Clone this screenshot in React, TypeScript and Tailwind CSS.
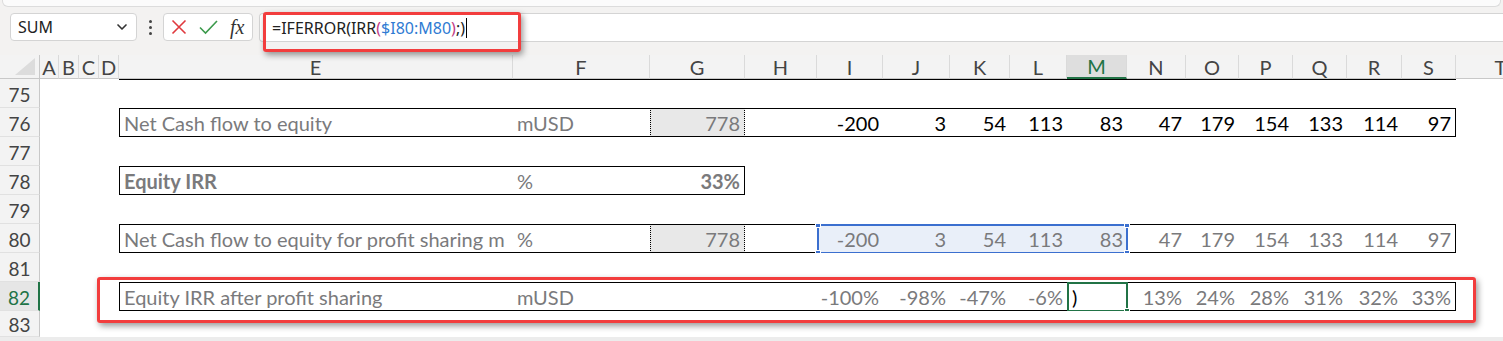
import { ChevronDown } from 'lucide-react'

type CellDef = {
  t?: string
  right?: boolean
  bold?: boolean
  black?: boolean
  shaded?: boolean
}

type RowDef = {
  n: number
  box?: 'full' | 'short' | 'top'
  cells?: Record<string, CellDef>
  active?: boolean
}

const LETTERS = ['A', 'B', 'C', 'D', 'E', 'F', 'G', 'H', 'I', 'J', 'K', 'L', 'M', 'N', 'O', 'P', 'Q', 'R', 'S', 'T']

const GRID =
  'grid grid-cols-[40px_19px_20px_20px_20px_394px_137px_95px_72px_66px_67px_60px_57px_60px_59px_53px_54px_54px_55px_54px_90px]'

const FONT = { fontFamily: 'Lato, "Open Sans", sans-serif' }

function nums(vals: string[], black = false): Record<string, CellDef> {
  const out: Record<string, CellDef> = {}
  const cols = ['I', 'J', 'K', 'L', 'M', 'N', 'O', 'P', 'Q', 'R', 'S']
  vals.forEach((v, i) => {
    if (v !== '') out[cols[i]] = { t: v, right: true, black }
  })
  return out
}

const ROWS: RowDef[] = [
  { n: 75, box: 'top' },
  {
    n: 76,
    box: 'full',
    cells: {
      E: { t: 'Net Cash flow to equity' },
      F: { t: 'mUSD' },
      G: { t: '778', right: true, shaded: true },
      ...nums(['-200', '3', '54', '113', '83', '47', '179', '154', '133', '114', '97'], true),
    },
  },
  { n: 77 },
  {
    n: 78,
    box: 'short',
    cells: {
      E: { t: 'Equity IRR', bold: true },
      F: { t: '%' },
      G: { t: '33%', right: true, bold: true },
    },
  },
  { n: 79 },
  {
    n: 80,
    box: 'full',
    cells: {
      E: { t: 'Net Cash flow to equity for profit sharing m' },
      F: { t: '%' },
      G: { t: '778', right: true, shaded: true },
      ...nums(['-200', '3', '54', '113', '83', '47', '179', '154', '133', '114', '97']),
    },
  },
  { n: 81 },
  {
    n: 82,
    box: 'full',
    active: true,
    cells: {
      E: { t: 'Equity IRR after profit sharing' },
      F: { t: 'mUSD' },
      ...nums(['-100%', '-98%', '-47%', '-6%', '', '13%', '24%', '28%', '31%', '32%', '33%']),
    },
  },
  { n: 83 },
]

function Handle({ pos, color }: { pos: string; color: string }) {
  return <span className={`absolute h-[6px] w-[6px] border border-white ${pos} ${color}`} />
}

function SheetRow({ row, last }: { row: RowDef; last?: boolean }) {
  const h = last ? 'h-[26px] grid-rows-[26px]' : 'h-[29px] grid-rows-[29px]'
  return (
    <div className={`${GRID} ${h} overflow-hidden`}>
      <div
        className={[
          'flex items-center justify-center overflow-hidden border-b border-b-[#e1e1e1] pt-[3px] text-[19px] leading-[24px]',
          row.active
            ? 'border-r-2 border-r-[#217346] bg-[#e6e6e6] text-[#217346]'
            : 'border-r border-r-[#c8c8c8] bg-[#f3f3f3] text-[#444]',
        ].join(' ')}
      >
        {row.n}
      </div>
      {LETTERS.map((L, i) => {
        const c = row.cells?.[L]
        const inFull = row.box === 'full' && i >= 4 && i <= 18
        const inShort = row.box === 'short' && i >= 4 && i <= 6
        const boxed = inFull || inShort
        const first = boxed && i === 4
        const lastCell = (inFull && i === 18) || (inShort && i === 6)
        const selected = row.n === 80 && i >= 8 && i <= 12
        const bg = c?.shaded ? 'bg-[#e8e8e8]' : selected ? 'bg-[#e9eff9]' : 'bg-white'
        const cls = [
          'relative min-h-0',
          bg,
          boxed ? 'border-y border-black' : '',
          row.box === 'top' && i >= 4 && i <= 18 ? 'border-t border-black' : '',
          first ? 'border-l' : '',
          lastCell ? 'border-r' : '',
          c?.shaded ? 'border-x [border-left-style:dotted] [border-right-style:dotted]' : '',
        ].join(' ')
        return (
          <div key={L} className={cls}>
            {c?.t && (
              <div
                className={[
                  'flex h-full items-end overflow-hidden whitespace-nowrap px-[4px] pb-[1px] text-[20px] leading-[24px]',
                  c.right ? 'justify-end' : '',
                  c.bold ? 'font-bold' : '',
                  c.black ? 'text-black' : 'text-[#7a7a7c]',
                ].join(' ')}
              >
                {c.t}
              </div>
            )}
            {row.n === 80 && L === 'I' && (
              <div className="pointer-events-none absolute -top-px left-0 z-10 h-[30px] w-[311px] border-2 border-[#3b6fcf]">
                <Handle pos="-left-[4px] -top-[4px]" color="bg-[#3b6fcf]" />
                <Handle pos="-right-[4px] -top-[4px]" color="bg-[#3b6fcf]" />
                <Handle pos="-left-[4px] -bottom-[4px]" color="bg-[#3b6fcf]" />
                <Handle pos="-right-[4px] -bottom-[4px]" color="bg-[#3b6fcf]" />
              </div>
            )}
            {row.active && L === 'M' && (
              <div className="absolute -top-px left-0 z-10 h-[30px] w-[61px] border-2 border-[#217346]">
                <div className="flex h-full items-end pb-[1px] pl-[3px] text-[20px] leading-[24px] text-black">)</div>
                <Handle pos="-right-[4px] -bottom-[4px]" color="bg-[#217346]" />
              </div>
            )}
          </div>
        )
      })}
    </div>
  )
}

function FormulaBar() {
  return (
    <div className="flex h-[48px] items-start pt-[6px]" style={{ fontFamily: '"Noto Sans", "Open Sans", sans-serif' }}>
      <div className="ml-[10px] flex h-[28px] w-[127px] items-center justify-between rounded-[4px] border border-[#d4d4d4] bg-white pl-[7px] pr-[6px] text-[16px] text-[#222]">
        <span>SUM</span>
        <ChevronDown size={16} strokeWidth={2.5} className="text-[#333]" />
      </div>
      <div className="flex h-[28px] w-[26px] flex-col items-center justify-center gap-[3px]">
        <span className="h-[3px] w-[3px] rounded-full bg-[#444]" />
        <span className="h-[3px] w-[3px] rounded-full bg-[#444]" />
        <span className="h-[3px] w-[3px] rounded-full bg-[#444]" />
      </div>
      <div className="flex h-[28px] w-[90px] items-center gap-[12px] rounded-[4px] border border-[#d4d4d4] bg-white pl-[7px]">
        <svg width="16" height="16" viewBox="0 0 16 16" fill="none" stroke="#e0393e" strokeWidth="1.6">
          <path d="M1.5 1.5 14.5 14.5M14.5 1.5 1.5 14.5" />
        </svg>
        <svg width="19" height="16" viewBox="0 0 19 16" fill="none" stroke="#3c9a4c" strokeWidth="1.6">
          <path d="M1 8.5 6.5 14 18 2" />
        </svg>
        <span className="text-[20px] italic leading-none text-[#333]" style={{ fontFamily: '"Liberation Serif", serif' }}>
          fx
        </span>
      </div>
      <div className="ml-[6px] flex h-[29px] flex-1 items-center rounded-l-[4px] border border-r-0 border-[#d4d4d4] bg-white pl-[12px] text-[16px] text-[#222]">
        <span>=IFERROR(IRR</span>
        <span className="text-[#c23c87]">(</span>
        <span className="text-[#2f7bd3]">$I80:M80</span>
        <span className="text-[#c23c87]">)</span>
        <span>;)</span>
        <span className="ml-px h-[20px] w-px bg-black" />
      </div>
    </div>
  )
}

function HeaderRow() {
  return (
    <div className={`${GRID} h-[24px] grid-rows-[24px] bg-[#f3f3f3]`}>
      <div className="relative border-r border-b border-[#c8c8c8]">
        <svg className="absolute right-[4px] bottom-[3px]" width="20" height="17" viewBox="0 0 20 17">
          <path d="M20 0 20 17 0 17Z" fill="#dcdcdc" />
        </svg>
      </div>
      {LETTERS.map((L) => (
        <div
          key={L}
          className={[
            'flex items-center justify-center overflow-hidden border-r border-[#dadada] text-[20px] leading-[22px]',
            L === 'M'
              ? 'border-b-2 border-b-[#217346] bg-[#dedede] text-[#217346]'
              : 'border-b border-b-[#c8c8c8] text-[#444]',
          ].join(' ')}
        >
          {L}
        </div>
      ))}
    </div>
  )
}

export default function App() {
  return (
    <div className="relative h-[341px] w-[1503px] overflow-hidden bg-[#f3f2f1]" style={FONT}>
      <div className="mx-[2px] h-[7px] rounded-b-[6px] border-x border-b border-[#dcdcdc] bg-[#fbfbfb]" />
      <FormulaBar />
      <HeaderRow />
      {ROWS.map((r, i) => (
        <SheetRow key={r.n} row={r} last={i === ROWS.length - 1} />
      ))}
      <div className="h-[4px] bg-[#ececec]" />

      {/* annotation boxes */}
      <div className="pointer-events-none absolute left-[263px] top-[12px] z-20 h-[40px] w-[258px] rounded-[3px] border-[3px] border-[#f23d3d] shadow-[2px_3px_6px_rgba(0,0,0,0.4)]" />
      <div className="pointer-events-none absolute left-[97px] top-[277px] z-20 h-[46px] w-[1379px] rounded-[3px] border-[3px] border-[#f23d3d] shadow-[2px_3px_6px_rgba(0,0,0,0.4)]" />
    </div>
  )
}
